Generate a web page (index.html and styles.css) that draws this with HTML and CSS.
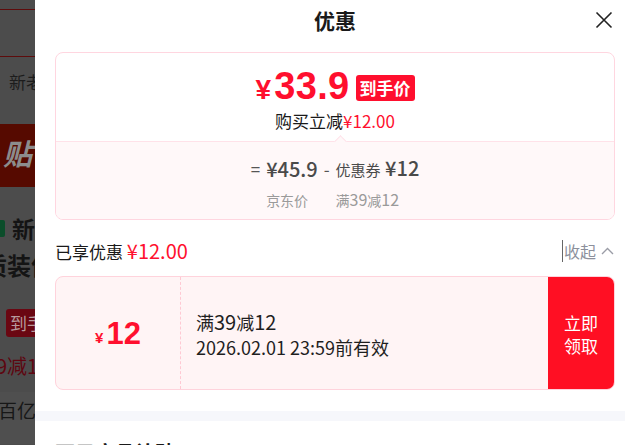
FILE: index.html
```html
<!DOCTYPE html>
<html lang="zh-CN">
<head>
<meta charset="utf-8">
<title>优惠</title>
<link rel="stylesheet" href="styles.css">
</head>
<body>
<aside class="backdrop">
  <div class="bd-top"></div>
  <div class="bd-nav"></div>
  <div class="bd-tabs">新老用户</div>
  <div class="bd-banner"><span>贴</span></div>
  <div class="bd-goods">
    <div class="bd-title"><i class="bd-tag"></i><b>新</b></div>
    <div class="bd-title2">质装值</div>
    <div class="bd-badge">到手价</div>
    <div class="bd-save">9减12</div>
  </div>
  <div class="bd-foot">百亿补贴</div>
</aside>

<main class="sheet">
  <div class="sheet-inner">
    <header class="head">
      <span></span>
      <h1>优惠</h1>
      <svg class="close" width="18" height="18" viewBox="0 0 18 18"><path d="M1.5 1.5L16.5 16.5M16.5 1.5L1.5 16.5" stroke="#222" stroke-width="1.6" fill="none"/></svg>
    </header>

    <section class="price-card">
      <div class="pc-top">
        <div class="pc-price">
          <span class="amount"><span class="yen">¥</span>33.9</span>
          <span class="tag">到手价</span>
        </div>
        <div class="pc-sub">购买立减<span class="red">¥12.00</span></div>
      </div>
      <div class="pc-bottom">
        <i class="notch"></i>
        <div class="formula">
          <span class="op">=</span>
          <span class="val">¥45.9</span>
          <span class="op">-</span>
          <span class="val"><small>优惠券</small> ¥12</span>
          <span></span>
          <span class="lbl">京东价</span>
          <span></span>
          <span class="lbl">满<span class="lnum">39</span>减<span class="lnum">12</span></span>
        </div>
      </div>
    </section>

    <div class="enjoyed">
      <div class="enjoyed-txt">已享优惠 <span class="red big-num">¥12.00</span></div>
      <div class="fold"><i class="caret"></i>收起<svg width="13" height="8" viewBox="0 0 13 8"><path d="M1 7L6.5 1.5L12 7" stroke="#9a9ca6" stroke-width="1.4" fill="none"/></svg></div>
    </div>

    <section class="coupon">
      <div class="cp-amt"><span class="cp-yen">¥</span>12</div>
      <div class="cp-info">
        <div>满<span class="cnum">39</span>减<span class="cnum">12</span></div>
        <div>2026.02.01 23:59前有效</div>
      </div>
      <div class="cp-btn">立即<br>领取</div>
    </section>
  </div>

  <div class="band"></div>
  <h2 class="next">万元商品补贴</h2>
</main>
</body>
</html>
```

FILE: styles.css
```css
* { box-sizing: border-box; }
html, body { margin: 0; padding: 0; }
body {
  width: 625px;
  height: 445px;
  overflow: hidden;
  display: flex;
  font-family: "Noto Sans CJK SC", "Noto Sans", sans-serif;
  color: #1f1f1f;
}

/* darkened page behind the sheet */
.backdrop {
  width: 35px;
  flex: none;
  background: #4c4c4c;
  overflow: hidden;
  white-space: nowrap;
  color: #141414;
}
.bd-top { height: 10px; border-bottom: 1px solid #5e0c0c; }
.bd-nav { height: 47px; border-bottom: 1px solid #5e0c0c; }
.bd-tabs { height: 67px; padding: 13px 0 0 9px; font-size: 17px; line-height: 24px; color: #1c1c1c; }
.bd-banner { height: 63px; background: #560a00; padding: 10px 0 0 3px; }
.bd-banner span { font-size: 29px; line-height: 36px; font-weight: 700; font-style: italic; color: #8c8c8c; }
.bd-goods { height: 205px; padding-top: 26px; }
.bd-title { display: flex; align-items: center; height: 30px; font-size: 23px; line-height: 30px; }
.bd-tag { display: block; width: 5px; height: 17px; background: #0b4d2a; border-radius: 0 2px 2px 0; margin-right: 7px; }
.bd-title2 { margin: 7px 0 0 -17px; font-size: 24px; line-height: 30px; font-weight: 700; }
.bd-badge {
  margin: 29px 0 0 6px;
  width: 50px;
  height: 28px;
  background: #6a0712;
  border-radius: 3px;
  padding-left: 4px;
  font-size: 17px;
  line-height: 28px;
  color: #b79a9d;
}
.bd-save { margin: 16px 0 0 -4px; font-size: 20px; line-height: 26px; color: #5e0610; }
.bd-foot { height: 52px; background: #4f4f4f; padding-top: 4px; font-size: 19px; line-height: 28px; color: #171717; margin-left: -2px; }

/* sheet */
.sheet { flex: 1; background: #fff; overflow: hidden; }
.sheet-inner { padding: 0 10px 0 20px; }
.head {
  height: 40px;
  display: grid;
  grid-template-columns: 1fr auto 1fr;
  align-items: center;
}
.head h1 { margin: 0; font-size: 21px; line-height: 28px; font-weight: 700; color: #1a1a1a; }
.close { justify-self: end; margin-right: 2px; }

.red { color: #ff0f2e; }

.price-card {
  margin-top: 12px;
  border: 1px solid #ffd6e0;
  border-radius: 8px;
  overflow: hidden;
}
.pc-top {
  height: 88px;
  padding-top: 15px;
  display: flex;
  flex-direction: column;
  align-items: center;
}
.pc-price { display: flex; align-items: center; gap: 6px; height: 40px; }
.amount {
  font-family: "Liberation Sans", Arial, sans-serif;
  font-weight: 700;
  font-size: 38px;
  line-height: 40px;
  color: #ff0f2e;
  letter-spacing: 0.3px;
}
.yen { font-size: 28px; margin-right: 3px; }
.tag {
  height: 26px;
  padding: 0 4px;
  background: #ff0f2e;
  color: #fff;
  border-radius: 3px;
  font-size: 17px;
  line-height: 26px;
  font-weight: 700;
}
.pc-sub { margin-top: 1px; font-size: 17px; line-height: 24px; color: #1a1a1a; }

.pc-bottom {
  position: relative;
  height: 78px;
  background: #fff8f9;
  border-top: 1px solid #ffe2e9;
  padding-top: 12px;
  display: flex;
  justify-content: center;
  align-items: flex-start;
}
.notch {
  position: absolute;
  left: 280px;
  top: -5px;
  width: 9px;
  height: 9px;
  background: #fff8f9;
  border-top: 1px solid #ffe2e9;
  border-left: 1px solid #ffe2e9;
  transform: rotate(45deg);
}
.formula {
  display: grid;
  grid-template-columns: auto auto auto auto;
  align-content: start;
  column-gap: 6px;
  row-gap: 8px;
  align-items: center;
}
.op { font-size: 17px; line-height: 28px; color: #555; }
.val { font-size: 20px; line-height: 28px; color: #4a4a4a; font-weight: 500; }
.val small { font-size: 15px; font-weight: 400; }
.lbl { font-size: 14px; line-height: 14px; color: #9a9a9a; }
.lnum { font-size: 16px; line-height: 14px; }

.enjoyed {
  margin-top: 10px;
  height: 42px;
  display: flex;
  align-items: center;
  justify-content: space-between;
}
.enjoyed-txt { font-size: 17px; line-height: 24px; color: #1a1a1a; }
.big-num { font-size: 20px; }
.fold {
  display: flex;
  align-items: center;
  font-size: 16px;
  line-height: 24px;
  color: #8c909c;
  margin-right: 1px;
}
.fold svg { margin-left: 5px; }
.caret { display: block; width: 1px; height: 22px; background: #666; margin-right: 1px; }

.coupon {
  margin-top: 4px;
  height: 114px;
  display: flex;
  border: 1px solid #ffd3dc;
  border-radius: 8px;
  background: #fff4f5;
  overflow: hidden;
}
.cp-amt {
  width: 125px;
  flex: none;
  border-right: 1px dashed #ffc9d3;
  display: flex;
  align-items: center;
  justify-content: center;
  padding-top: 2px;
  font-family: "Liberation Sans", Arial, sans-serif;
  font-weight: 700;
  font-size: 31px;
  color: #ff0f2e;
}
.cp-yen { font-size: 15px; margin-right: 3px; margin-top: 6px; }
.cp-info {
  flex: 1;
  padding: 3px 0 0 15px;
  display: flex;
  flex-direction: column;
  justify-content: center;
  font-size: 18px;
  line-height: 25px;
  color: #1f1f1f;
}
.cnum { font-size: 20px; }
.cp-btn {
  width: 66px;
  flex: none;
  background: #ff0f23;
  color: #fff;
  display: flex;
  align-items: center;
  justify-content: center;
  text-align: center;
  font-size: 17px;
  line-height: 23px;
  padding-top: 1px;
}

.band { margin-top: 21px; height: 10px; background: #f6f7fb; }
.next { margin: 0; padding: 18px 20px 0; font-size: 20px; line-height: 28px; font-weight: 700; color: #1a1a1a; }
```
